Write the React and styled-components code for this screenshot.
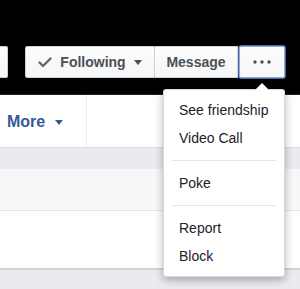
import React from "react";
import styled, { createGlobalStyle } from "styled-components";

const GlobalStyle = createGlobalStyle`
	html, body {
		margin: 0;
		padding: 0;
		background: #e9ebee;
		font-family: "Liberation Sans", Helvetica, Arial, sans-serif;
	}
	#root {
		width: 300px;
		height: 289px;
		overflow: hidden;
	}
`;

const Caret = ({ color = "#4b4f56", size = 8 }) => (
	<svg width={size} height={size / 2 + 1} viewBox="0 0 8 5">
		<path d="M0 0 L8 0 L4 5 Z" fill={color} />
	</svg>
);

const Check = () => (
	<svg width="14" height="11" viewBox="0 0 14 11">
		<path
			d="M1.5 5.5 L5 9 L12.5 1.5"
			fill="none"
			stroke="#606770"
			strokeWidth="2.4"
			strokeLinecap="round"
			strokeLinejoin="round"
		/>
	</svg>
);

const Dots = () => (
	<svg width="18" height="4" viewBox="0 0 18 4">
		<circle cx="2" cy="2" r="1.7" fill="#4b4f56" />
		<circle cx="9" cy="2" r="1.7" fill="#4b4f56" />
		<circle cx="16" cy="2" r="1.7" fill="#4b4f56" />
	</svg>
);

const menuItems = [
	["See friendship", "Video Call"],
	["Poke"],
	["Report", "Block"],
];

const App = () => {
	return (
		<Page>
			<GlobalStyle />
			<Cover>
				<ActionRow>
					<PartialButton />
					<ButtonGroup>
						<ActionButton $width={130} $first>
							<Check />
							<Label>Following</Label>
							<Caret />
						</ActionButton>
						<ActionButton $width={83}>
							<Label>Message</Label>
						</ActionButton>
						<ActionButton $width={48} $focused $last>
							<Dots />
						</ActionButton>
					</ButtonGroup>
				</ActionRow>
			</Cover>
			<NavBar>
				<NavTab>
					More
					<Caret color="#365899" />
				</NavTab>
			</NavBar>
			<GrayBand />
			<LightBand />
			<WhiteBand />
			<Dropdown>
				{menuItems.map((group, gi) => (
					<React.Fragment key={gi}>
						{gi > 0 && <Separator />}
						{group.map((item) => (
							<MenuItem key={item}>{item}</MenuItem>
						))}
					</React.Fragment>
				))}
			</Dropdown>
		</Page>
	);
};

export default App;

const Page = styled.div`
	position: relative;
	width: 300px;
	height: 289px;
	display: flex;
	flex-direction: column;
	background: #e9ebee;
`;

const Cover = styled.div`
	height: 94px;
	background: #000;
	border-bottom: 1px solid #1d2129;
	overflow: hidden;
`;

const ActionRow = styled.div`
	display: flex;
	justify-content: flex-end;
	align-items: center;
	gap: 17px;
	padding: 45px 14px 0 0;
`;

const PartialButton = styled.div`
	width: 8px;
	height: 30px;
	flex-shrink: 0;
	margin-left: -20px;
	padding-left: 20px;
	background: linear-gradient(#fdfdfd, #f5f6f7);
	border: 1px solid #ced0d4;
	border-left: none;
	border-radius: 0 2px 2px 0;
`;

const ButtonGroup = styled.div`
	display: flex;
	align-items: stretch;
	height: 34px;
`;

const ActionButton = styled.div`
	box-sizing: border-box;
	width: ${(p) => p.$width}px;
	display: flex;
	align-items: center;
	justify-content: center;
	gap: 8px;
	margin: ${(p) => (p.$focused ? "0" : "1px 0")};
	background: linear-gradient(#fdfdfd, #f5f6f7);
	border: 1px solid ${(p) => (p.$focused ? "#4267b2" : "#ced0d4")};
	border-left: ${(p) =>
		p.$first || p.$focused ? "" : "none"};
	border-radius: ${(p) =>
		p.$first ? "2px 0 0 2px" : p.$last ? "3px" : "0"};
	box-shadow: ${(p) =>
		p.$focused ? "inset 0 0 0 1px rgba(66, 103, 178, 0.55)" : "none"};
	color: #4b4f56;
	font-size: 14px;
	font-weight: bold;
`;

const Label = styled.span`
	line-height: 16px;
`;

const NavBar = styled.div`
	height: 52px;
	background: #fff;
	border-bottom: 1px solid #dddfe2;
	display: flex;
`;

const NavTab = styled.div`
	width: 79px;
	padding-left: 7px;
	padding-top: 2px;
	border-right: 1px solid #e9ebee;
	display: flex;
	align-items: center;
	gap: 10px;
	color: #365899;
	font-size: 16px;
	font-weight: bold;
`;

const GrayBand = styled.div`
	height: 21px;
	background: #e9ebee;
`;

const LightBand = styled.div`
	height: 41px;
	background: #f6f7f9;
	border-bottom: 1px solid #e5e6e9;
`;

const WhiteBand = styled.div`
	height: 57px;
	background: #fff;
	border-bottom: 2px solid #d3d5d9;
`;

const Dropdown = styled.div`
	position: absolute;
	top: 89px;
	left: 163px;
	width: 122px;
	box-sizing: border-box;
	padding: 6px 0;
	background: #fff;
	border: 1px solid rgba(0, 0, 0, 0.15);
	border-radius: 3px;
	box-shadow: 0 3px 8px rgba(0, 0, 0, 0.3);

	&::before,
	&::after {
		content: "";
		position: absolute;
		left: 90px;
		border: 8px solid transparent;
		border-top: none;
	}

	&::before {
		top: -8px;
		border-bottom-color: rgba(0, 0, 0, 0.2);
	}

	&::after {
		top: -7px;
		border-bottom-color: #fff;
	}
`;

const MenuItem = styled.div`
	height: 28px;
	line-height: 28px;
	padding: 0 15px;
	color: #1d2129;
	font-size: 14px;
	white-space: nowrap;
`;

const Separator = styled.div`
	height: 1px;
	margin: 8px 8px;
	background: #e5e5e5;
`;
